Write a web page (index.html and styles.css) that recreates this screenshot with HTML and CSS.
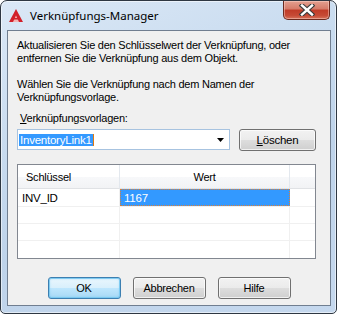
FILE: index.html
```html
<!DOCTYPE html>
<html lang="de">
<head>
<meta charset="utf-8">
<title>Verknüpfungs-Manager</title>
<link rel="stylesheet" href="styles.css">
</head>
<body>
<div class="window">
  <div class="titlebar">
    <svg class="app-icon" width="14" height="14" viewBox="0 0 14 14">
      <polygon points="7,0 14,13 0,13" fill="#d2202a"/>
      <polygon points="7,6.5 10,13 4,13" fill="#f3b4b4"/>
      <rect x="3" y="9" width="8" height="1.5" fill="#d2202a"/>
    </svg>
    <span class="title">Verknüpfungs-Manager</span>
    <div class="close-btn">
      <svg width="16" height="12" viewBox="0 0 16 12">
        <path d="M3 1.5 L13 10.5 M13 1.5 L3 10.5" stroke="#3b3b3b" stroke-width="4.6" stroke-linecap="square"/>
        <path d="M3 1.5 L13 10.5 M13 1.5 L3 10.5" stroke="#ffffff" stroke-width="2.4" stroke-linecap="square"/>
      </svg>
    </div>
  </div>
  <div class="client">
    <p class="para first">Aktualisieren Sie den Schlüsselwert der Verknüpfung, oder<br>entfernen Sie die Verknüpfung aus dem Objekt.</p>
    <p class="para second">Wählen Sie die Verknüpfung nach dem Namen der<br>Verknüpfungsvorlage.</p>
    <div class="label"><u>V</u>erknüpfungsvorlagen:</div>
    <div class="combo-row">
      <div class="combo">
        <span class="combo-sel">InventoryLink1</span>
        <span class="combo-caret"></span>
        <svg class="combo-arrow" width="7" height="4" viewBox="0 0 7 4"><polygon points="0,0 7,0 3.5,4" fill="#000"/></svg>
      </div>
      <div class="btn del-btn"><u>L</u>öschen</div>
    </div>
    <div class="table">
      <div class="th c1">Schlüssel</div>
      <div class="th c2">Wert</div>
      <div class="th c3"></div>
      <div class="td c1">INV_ID</div>
      <div class="td c2"><span class="sel-cell">1167</span></div>
      <div class="td c3"></div>
      <div class="td c1"></div>
      <div class="td c2"></div>
      <div class="td c3"></div>
      <div class="td c1"></div>
      <div class="td c2"></div>
      <div class="td c3"></div>
      <div class="tfill c1"></div>
      <div class="tfill c2"></div>
      <div class="tfill c3"></div>
    </div>
    <div class="buttons">
      <div class="btn ok-btn">OK</div>
      <div class="btn">Abbrechen</div>
      <div class="btn">Hilfe</div>
    </div>
  </div>
</div>
</body>
</html>
```
FILE: styles.css
```css
html, body {
  margin: 0;
  padding: 0;
  background: #ffffff;
}

.window {
  width: 337px;
  height: 314px;
  box-sizing: border-box;
  border: 1px solid #2e3742;
  border-radius: 7px 7px 5px 5px;
  background: linear-gradient(160deg, #dbe8f6 0%, #c8dbef 35%, #bed3ea 60%, #c5d8ee 100%);
  box-shadow: inset 0 0 0 1px rgba(255,255,255,0.55);
  display: flex;
  flex-direction: column;
  overflow: hidden;
  font-family: "Liberation Sans", Arial, sans-serif;
  font-size: 11px;
  letter-spacing: -0.23px;
  color: #000;
}

.titlebar {
  height: 29px;
  display: flex;
  align-items: center;
  padding-left: 8px;
  flex: none;
}

.app-icon {
  flex: none;
}

.title {
  margin-left: 7px;
  font-family: "Noto Sans", "Open Sans", sans-serif;
  font-size: 11.5px;
  letter-spacing: 0;
  color: #000;
  margin-top: -1px;
}

.close-btn {
  margin-left: auto;
  margin-right: 6px;
  align-self: flex-start;
  width: 47px;
  height: 19px;
  box-sizing: border-box;
  border: 1px solid #6b2a1f;
  border-top: none;
  border-radius: 0 0 5px 5px;
  background: linear-gradient(to bottom, #e3a090 0%, #d57a68 45%, #c03b27 50%, #c64a35 80%, #d6725b 100%);
  box-shadow: inset 0 0 0 1px rgba(255,220,210,0.45);
  display: flex;
  align-items: center;
  justify-content: center;
}

.client {
  flex: 1;
  margin: 0 5px 7px 6px;
  border: 1px solid #707e90;
  background: #f0f0f0;
  display: flex;
  flex-direction: column;
}

.para {
  margin: 0 0 0 9px;
  line-height: 13px;
}

.para.first {
  margin-top: 8px;
}

.para.second {
  margin-top: 13px;
}

.label {
  margin: 8px 0 0 12px;
  line-height: 13px;
}

.combo-row {
  display: flex;
  margin: 4px 0 0 9px;
  gap: 9px;
  align-items: flex-start;
}

.combo {
  width: 213px;
  height: 21px;
  box-sizing: border-box;
  border: 1px solid #a7c3e0;
  background: #fff;
  display: flex;
  align-items: center;
  padding-left: 1px;
}

.combo-sel {
  background: #3399ff;
  color: #fff;
  line-height: 12px;
  padding: 0 1px;
  font-size: 11.5px;
}

.combo-caret {
  width: 1px;
  height: 12px;
  background: #e07a10;
}

.combo-arrow {
  margin-left: auto;
  margin-right: 5px;
}

.btn {
  height: 22px;
  box-sizing: border-box;
  border: 1px solid #707070;
  border-radius: 3px;
  background: linear-gradient(to bottom, #f2f2f2 0%, #ebebeb 48%, #dddddd 52%, #cfcfcf 100%);
  box-shadow: inset 0 0 0 1px rgba(255,255,255,0.7);
  display: flex;
  align-items: center;
  justify-content: center;
  color: #000;
}

.del-btn {
  width: 77px;
  font-size: 11.5px;
}

.table {
  margin: 13px 0 0 9px;
  width: 299px;
  height: 95px;
  box-sizing: border-box;
  border: 1px solid #828790;
  background: #fff;
  display: grid;
  grid-template-columns: 102px 170px 1fr;
  grid-template-rows: 24px 18px 17px 17px 1fr;
}

.th {
  background: linear-gradient(to bottom, #ffffff 0%, #ffffff 50%, #f7f8fa 51%, #f2f3f5 100%);
  border-bottom: 1px solid #e0e2e5;
  border-right: 1px solid #e3e8ee;
  display: flex;
  align-items: center;
}

.th.c1 {
  padding-left: 8px;
}

.th.c2 {
  justify-content: center;
}

.th.c3 {
  border-right: none;
}

.td, .tfill {
  border-right: 1px solid #f0f0f0;
  border-bottom: 1px solid #f0f0f0;
  display: flex;
  align-items: center;
  font-size: 11.5px;
}

.tfill {
  border-bottom: none;
}

.td.c3, .tfill.c3 {
  border-right: none;
}

.td.c1 {
  padding-left: 4px;
}

.sel-cell {
  align-self: stretch;
  flex: 1;
  background: #3399ff;
  color: #fff;
  display: flex;
  align-items: center;
  padding-left: 3px;
  border: 1px dotted #d9803a;
  margin-right: -1px;
}

.buttons {
  display: flex;
  justify-content: center;
  gap: 12px;
  margin-top: 18px;
}

.buttons .btn {
  width: 73px;
  font-size: 11px;
}

.ok-btn {
  border-color: #3c7fb1;
  background: linear-gradient(to bottom, #eaf6fd 0%, #d9f0fc 48%, #bee6fd 52%, #a7d9f5 100%);
  box-shadow: inset 0 0 0 1px rgba(120,200,240,0.9), inset 0 0 3px rgba(80,180,240,0.6);
}
```
